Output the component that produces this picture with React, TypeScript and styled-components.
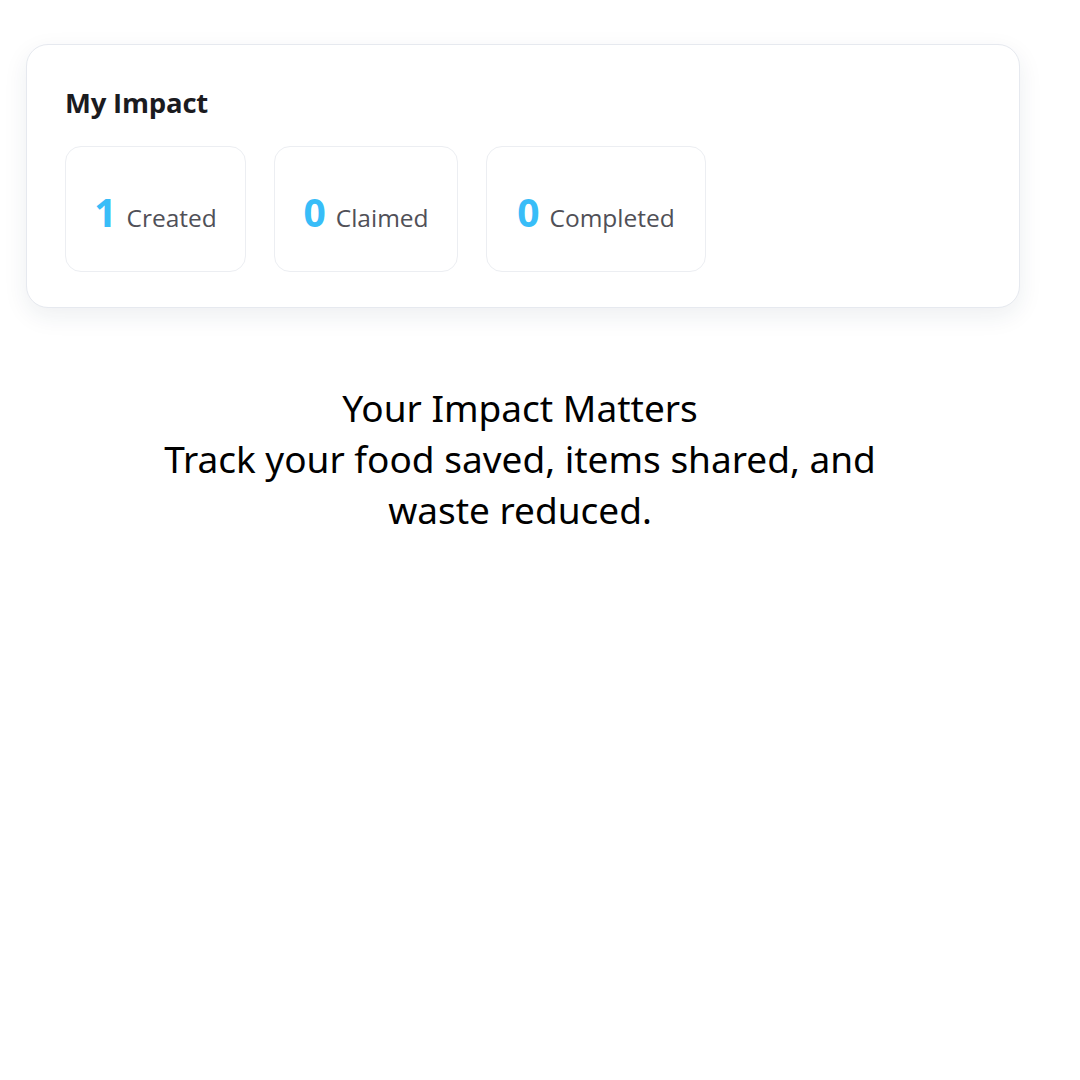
import React from "react";
import { createGlobalStyle, styled } from "styled-components";

const GlobalStyle = createGlobalStyle`
  body {
    margin: 0;
    background: #ffffff;
    font-family: "Open Sans", "Noto Sans", sans-serif;
  }
`;

const Page = styled.div`
  width: 994px;
  padding: 44px 0 0 26px;
  display: flex;
  flex-direction: column;
`;

const Card = styled.section`
  background: #ffffff;
  border: 1.5px solid #e6e9ef;
  border-radius: 22px;
  box-shadow: 0 8px 24px rgba(30, 45, 80, 0.08);
  padding: 41px 38px 35px;
  display: flex;
  flex-direction: column;
  gap: 26px;
`;

const Title = styled.h2`
  margin: 0;
  font-family: "Open Sans", sans-serif;
  font-size: 27.5px;
  font-weight: 700;
  color: #1b1b1f;
  letter-spacing: -0.2px;
  line-height: 34px;
`;

const StatRow = styled.div`
  display: flex;
  gap: 28px;
`;

const Stat = styled.div<{ $width: number }>`
  width: ${(p) => p.$width}px;
  height: 126px;
  box-sizing: border-box;
  border: 1.5px solid #eceef2;
  border-radius: 16px;
  display: flex;
  align-items: baseline;
  justify-content: center;
  padding-top: 44px;
  gap: 10px;
`;

const Value = styled.span`
  font-size: 39px;
  font-weight: 700;
  color: #38bdf8;
  line-height: 42px;
`;

const Label = styled.span`
  font-size: 24.5px;
  color: #505057;
  line-height: 30px;
`;

const Message = styled.div`
  margin-top: 74px;
  text-align: center;
  font-family: "Noto Sans", sans-serif;
  font-size: 37px;
  line-height: 51px;
  color: #000000;
  padding: 0 130px 0 124px;
`;

const stats = [
  { value: 1, label: "Created", width: 181 },
  { value: 0, label: "Claimed", width: 184 },
  { value: 0, label: "Completed", width: 220 },
];

function App() {
  return (
    <Page>
      <GlobalStyle />
      <Card>
        <Title>My Impact</Title>
        <StatRow>
          {stats.map((s) => (
            <Stat key={s.label} $width={s.width}>
              <Value>{s.value}</Value>
              <Label>{s.label}</Label>
            </Stat>
          ))}
        </StatRow>
      </Card>
      <Message>
        Your Impact Matters
        <br />
        Track your food saved, items shared, and waste reduced.
      </Message>
    </Page>
  );
}

export default App;
